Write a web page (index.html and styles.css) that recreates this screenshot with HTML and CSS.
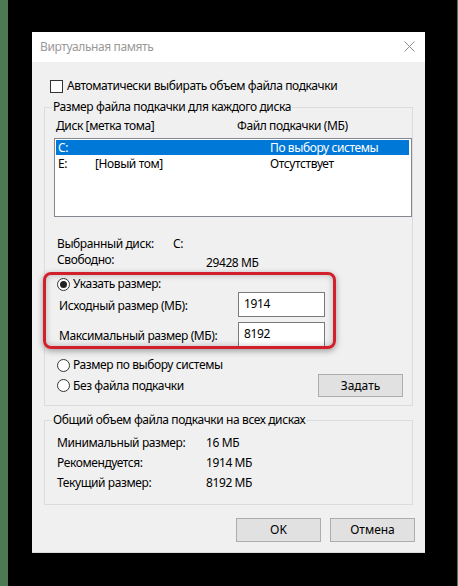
FILE: index.html
```html
<!DOCTYPE html>
<html lang="ru">
<head>
  <meta charset="UTF-8" />
  <title>Виртуальная память</title>
  <link rel="stylesheet" href="styles.css">
</head>
<body>
  <div class="dialog">
    <div class="titlebar">
      <span class="title">Виртуальная память</span>
      <svg class="close" width="11" height="11" viewBox="0 0 11 11">
        <path d="M0.5 0.5 L10.5 10.5 M10.5 0.5 L0.5 10.5" stroke="#8f8f8f" stroke-width="1" fill="none"/>
      </svg>
    </div>

    <div class="content">
      <div class="check-row">
        <span class="checkbox"></span>
        <span>Автоматически выбирать объем файла подкачки</span>
      </div>

      <div class="group group-disks">
        <div class="group-title">Размер файла подкачки для каждого диска</div>
        <div class="list-head">
          <span class="col-disk">Диск [метка тома]</span>
          <span>Файл подкачки (МБ)</span>
        </div>
        <div class="listbox">
          <div class="list-row selected">
            <span class="cell-letter">C:</span>
            <span class="cell-label"></span>
            <span>По выбору системы</span>
          </div>
          <div class="list-row">
            <span class="cell-letter">E:</span>
            <span class="cell-label">[Новый том]</span>
            <span>Отсутствует</span>
          </div>
        </div>

        <div class="info-row first">
          <span class="info-label">Выбранный диск:</span>
          <span>C:</span>
        </div>
        <div class="info-row">
          <span class="info-label free">Свободно:</span>
          <span class="free-value">29428 МБ</span>
        </div>

        <div class="radio-row custom">
          <span class="radio checked"></span>
          <span>Указать размер:</span>
        </div>
        <div class="field-row">
          <span class="field-label">Исходный размер (МБ):</span>
          <span class="input">1914</span>
        </div>
        <div class="field-row second">
          <span class="field-label">Максимальный размер (МБ):</span>
          <span class="input">8192</span>
        </div>

        <div class="radio-row system">
          <span class="radio"></span>
          <span>Размер по выбору системы</span>
        </div>
        <div class="radio-row nofile">
          <span class="radio"></span>
          <span>Без файла подкачки</span>
          <button class="btn btn-set">Задать</button>
        </div>

        <div class="highlight"></div>
      </div>

      <div class="group group-total">
        <div class="group-title">Общий объем файла подкачки на всех дисках</div>
        <div class="total-row">
          <span class="total-label">Минимальный размер:</span>
          <span>16 МБ</span>
        </div>
        <div class="total-row">
          <span class="total-label">Рекомендуется:</span>
          <span>1914 МБ</span>
        </div>
        <div class="total-row">
          <span class="total-label">Текущий размер:</span>
          <span>8192 МБ</span>
        </div>
      </div>

      <div class="actions">
        <button class="btn">OK</button>
        <button class="btn">Отмена</button>
      </div>
    </div>
  </div>
</body>
</html>
```

FILE: styles.css
```css
body {
  margin: 0;
  height: 586px;
  box-sizing: border-box;
  padding: 32px 0 0 24px;
  background: #000;
  border-left: 8px solid #4c7a53;
  border-right: 1px solid #4c7a53;
  font-family: "Noto Sans", "Open Sans", sans-serif;
  font-size: 12px;
  line-height: 16px;
  letter-spacing: -0.4px;
  color: #000;
  overflow: hidden;
}
.dialog {
  width: 393px;
  height: 521px;
  display: flex;
  flex-direction: column;
}
.titlebar {
  height: 30px;
  flex: none;
  background: #fff;
  display: flex;
  align-items: center;
  padding: 0 10px 0 8px;
}
.title {
  color: #999;
  flex: 1;
}
.close {
  margin-top: -1px;
}
.content {
  flex: 1;
  background: #f0f0f0;
  padding-top: 14px;
  border-bottom: 1px solid #d9d9d9;
}
.check-row {
  height: 20px;
  display: flex;
  align-items: center;
  padding-left: 18px;
}
.checkbox {
  width: 11px;
  height: 11px;
  border: 1px solid #333;
  background: #fff;
  margin-right: 4px;
}

/* group boxes */
.group {
  position: relative;
  width: 367px;
  margin-left: 12px;
  border: 1px solid #dcdcdc;
}
.group-disks {
  margin-top: 11px;
  padding-bottom: 8px;
}
.group-total {
  margin-top: 14px;
  padding-bottom: 11px;
}
.group-title {
  width: max-content;
  margin: -9px 0 0 7px;
  padding: 0 1px;
  background: #f0f0f0;
}
.list-head {
  display: flex;
  margin-top: 3px;
  padding-left: 11px;
}
.col-disk {
  width: 181px;
}
.listbox {
  width: 356px;
  height: 76px;
  margin: 4px 0 0 9px;
  border: 1px solid #828790;
  background: #fff;
  padding-top: 1px;
  box-sizing: content-box;
}
.list-row {
  display: flex;
  height: 15px;
  line-height: 15px;
  width: 351px;
  margin-left: 1px;
  padding-left: 2px;
}
.list-row.selected {
  background: #0078d7;
  color: #fff;
}
.list-row + .list-row {
  margin-top: 1px;
}
.cell-letter {
  width: 37px;
}
.cell-label {
  width: 175px;
}
.info-row {
  display: flex;
  height: 16px;
  padding-left: 12px;
}
.info-row.first {
  margin-top: 19px;
}
.info-label {
  width: 116px;
}
.info-label.free {
  width: 149px;
}
.free-value {
  padding-top: 3px;
}
.radio-row {
  display: flex;
  align-items: center;
  height: 16px;
  padding-left: 12px;
}
.radio-row.custom {
  margin-top: 8px;
}
.radio-row.system {
  margin-top: 9px;
}
.radio-row.nofile {
  height: 23px;
  margin-top: 1px;
  padding-right: 9px;
}
.radio {
  position: relative;
  width: 11px;
  height: 11px;
  border: 1px solid #333;
  border-radius: 50%;
  background: #fff;
  margin-right: 3px;
}
.radio.checked::after {
  content: "";
  position: absolute;
  left: 2px;
  top: 2px;
  width: 7px;
  height: 7px;
  border-radius: 50%;
  background: #222;
}
.field-row {
  display: flex;
  align-items: center;
  height: 25px;
  padding-left: 14px;
}
.field-row.second {
  margin-top: 5px;
  height: 26px;
}
.field-label {
  width: 179px;
  padding-top: 2px;
}
.input {
  width: 87px;
  height: 100%;
  box-sizing: border-box;
  padding: 3px 0 0 5px;
  border: 1px solid #7a7a7a;
  background: #fff;
}
.btn {
  width: 85px;
  height: 23px;
  border: 1px solid #adadad;
  background: #e1e1e1;
  font: inherit;
  color: #000;
  padding: 0;
}
.btn-set {
  margin-left: auto;
}
.total-row {
  display: flex;
  align-items: center;
  height: 20px;
  padding-left: 12px;
}
.group-title + .total-row {
  margin-top: 5px;
}
.total-label {
  width: 149px;
}
.actions {
  display: flex;
  justify-content: flex-end;
  gap: 9px;
  margin-top: 13px;
  padding-right: 10px;
}
.actions .btn {
  height: 24px;
}

/* red annotation frame drawn over the dialog */
.highlight {
  position: absolute;
  left: -2px;
  top: 164px;
  width: 287px;
  height: 71px;
  border: 3px solid #d21f2c;
  border-radius: 8px;
  box-shadow: 0 2px 6px rgba(0, 0, 0, 0.35), inset 0 0 6px rgba(0, 0, 0, 0.25);
}
```
